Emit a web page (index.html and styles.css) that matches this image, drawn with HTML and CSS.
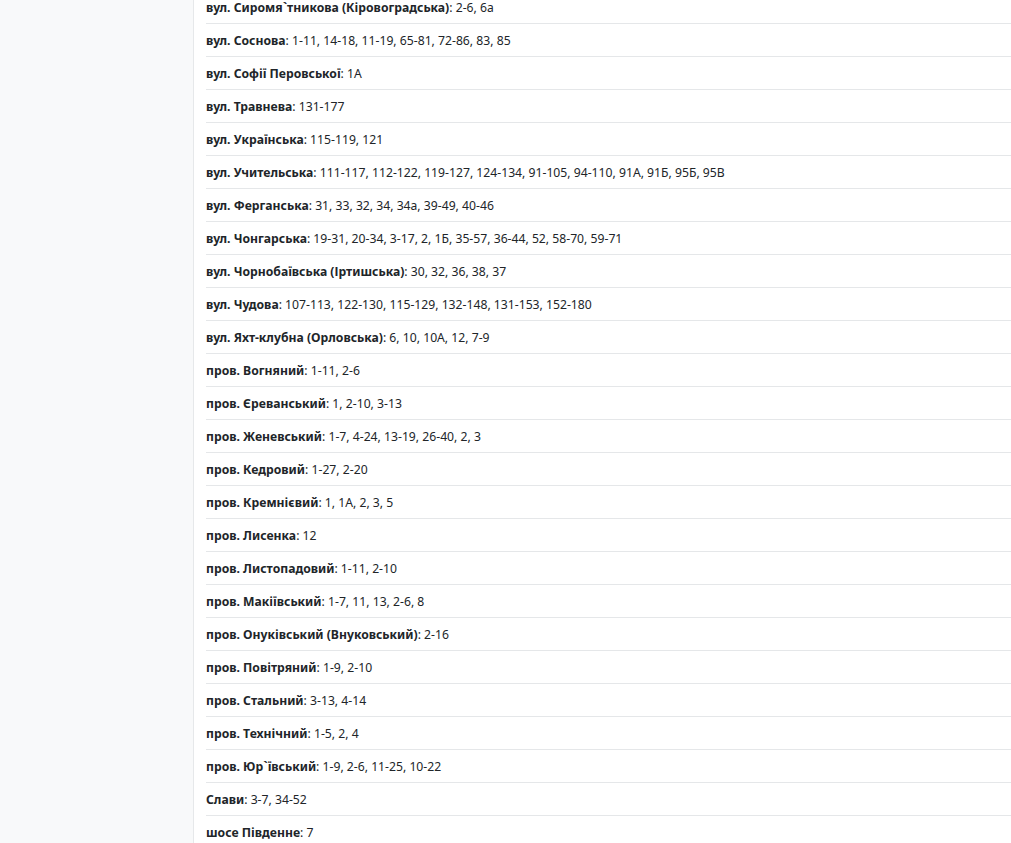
FILE: index.html
```html
<!DOCTYPE html>
<html lang="uk">
<head>
  <meta charset="UTF-8">
  <meta name="viewport" content="width=device-width, initial-scale=1.0">
  <title>Адреси</title>
  <link rel="stylesheet" href="styles.css">
</head>
<body>
  <div class="layout">
    <!-- Sidebar -->
    <aside class="sidebar"></aside>

    <!-- Street list -->
    <main class="content">
      <ul class="streets">
        <li><b>вул. Сиромя`тникова (Кіровоградська)</b>: 2-6, 6а</li>
        <li><b>вул. Соснова</b>: 1-11, 14-18, 11-19, 65-81, 72-86, 83, 85</li>
        <li><b>вул. Софії Перовської</b>: 1А</li>
        <li><b>вул. Травнева</b>: 131-177</li>
        <li><b>вул. Українська</b>: 115-119, 121</li>
        <li><b>вул. Учительська</b>: 111-117, 112-122, 119-127, 124-134, 91-105, 94-110, 91А, 91Б, 95Б, 95В</li>
        <li><b>вул. Ферганська</b>: 31, 33, 32, 34, 34а, 39-49, 40-46</li>
        <li><b>вул. Чонгарська</b>: 19-31, 20-34, 3-17, 2, 1Б, 35-57, 36-44, 52, 58-70, 59-71</li>
        <li><b>вул. Чорнобаївська (Іртишська)</b>: 30, 32, 36, 38, 37</li>
        <li><b>вул. Чудова</b>: 107-113, 122-130, 115-129, 132-148, 131-153, 152-180</li>
        <li><b>вул. Яхт-клубна (Орловська)</b>: 6, 10, 10А, 12, 7-9</li>
        <li><b>пров. Вогняний</b>: 1-11, 2-6</li>
        <li><b>пров. Єреванський</b>: 1, 2-10, 3-13</li>
        <li><b>пров. Женевський</b>: 1-7, 4-24, 13-19, 26-40, 2, 3</li>
        <li><b>пров. Кедровий</b>: 1-27, 2-20</li>
        <li><b>пров. Кремнієвий</b>: 1, 1А, 2, 3, 5</li>
        <li><b>пров. Лисенка</b>: 12</li>
        <li><b>пров. Листопадовий</b>: 1-11, 2-10</li>
        <li><b>пров. Макіївський</b>: 1-7, 11, 13, 2-6, 8</li>
        <li><b>пров. Онуківський (Внуковський)</b>: 2-16</li>
        <li><b>пров. Повітряний</b>: 1-9, 2-10</li>
        <li><b>пров. Стальний</b>: 3-13, 4-14</li>
        <li><b>пров. Технічний</b>: 1-5, 2, 4</li>
        <li><b>пров. Юр`ївський</b>: 1-9, 2-6, 11-25, 10-22</li>
        <li><b>Слави</b>: 3-7, 34-52</li>
        <li><b>шосе Південне</b>: 7</li>
      </ul>
    </main>
  </div>
</body>
</html>
```

FILE: styles.css
```css
/* Page */
body {
  margin: 0;
  font-family: 'Noto Sans', 'Open Sans', sans-serif;
  font-size: 12.2px;
  color: #212529;
  background-color: #fff;
  overflow: hidden;
}

.layout {
  display: flex;
  min-height: 100vh;
}

/* Sidebar */
.sidebar {
  width: 193px;
  flex-shrink: 0;
  background-color: #f8f9fa;
  border-right: 1px solid #e6e8ea;
}

/* Street list */
.content {
  flex: 1;
  padding-left: 12px;
}

.streets {
  list-style: none;
  margin: -9px 0 0 0;
  padding: 0;
}

.streets li {
  padding: 9px 0 7px;
  line-height: 16px;
  border-bottom: 1px solid #e5e7e9;
  white-space: nowrap;
}

.streets b {
  font-weight: 700;
}
```
